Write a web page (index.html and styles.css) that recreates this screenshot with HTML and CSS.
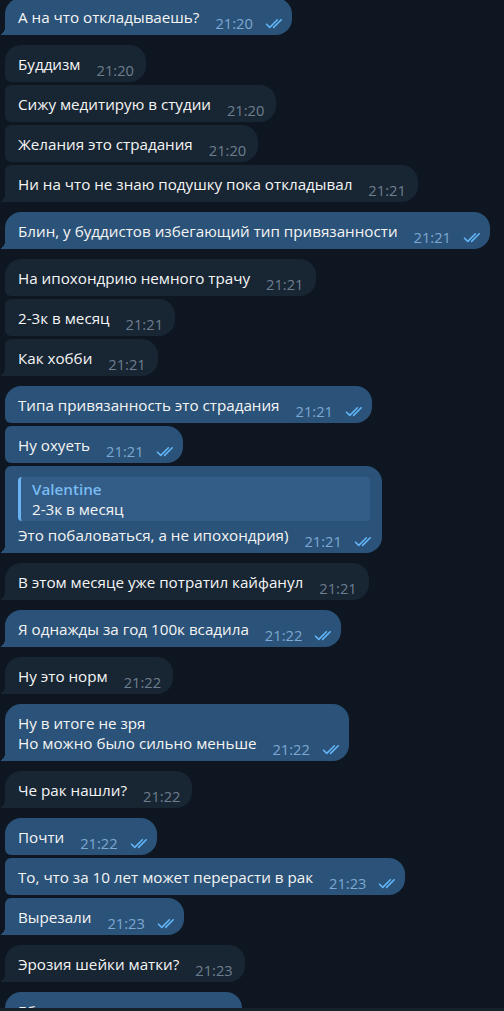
FILE: index.html
```html
<!DOCTYPE html>
<html lang="ru">
<head>
<meta charset="utf-8">
<title>Chat</title>
<link rel="stylesheet" href="styles.css">
</head>
<body>
<svg width="0" height="0" class="defs">
  <symbol id="dchk" viewBox="0 0 20 11">
    <path d="M1.5 6.2 L4.8 9.4 L12.4 1.8" fill="none" stroke="currentColor" stroke-width="1.6" stroke-linecap="round" stroke-linejoin="round"/>
    <path d="M8.6 9.4 L16.2 1.8" fill="none" stroke="currentColor" stroke-width="1.6" stroke-linecap="round"/>
  </symbol>
</svg>
<div class="screen">
  <div class="chat">
    <div class="group out first-group">
      <div class="msg tail"><span class="text">А на что откладываешь?</span><span class="meta"><span class="time">21:20</span><svg class="check"><use href="#dchk"/></svg></span></div>
    </div>
    <div class="group in">
      <div class="msg"><span class="text">Буддизм</span><span class="meta"><span class="time">21:20</span></span></div>
      <div class="msg"><span class="text">Сижу медитирую в студии</span><span class="meta"><span class="time">21:20</span></span></div>
      <div class="msg"><span class="text">Желания это страдания</span><span class="meta"><span class="time">21:20</span></span></div>
      <div class="msg tail"><span class="text">Ни на что не знаю подушку пока откладывал</span><span class="meta"><span class="time">21:21</span></span></div>
    </div>
    <div class="group out">
      <div class="msg tail"><span class="text">Блин, у буддистов избегающий тип привязанности</span><span class="meta"><span class="time">21:21</span><svg class="check"><use href="#dchk"/></svg></span></div>
    </div>
    <div class="group in">
      <div class="msg"><span class="text">На ипохондрию немного трачу</span><span class="meta"><span class="time">21:21</span></span></div>
      <div class="msg"><span class="text">2-3к в месяц</span><span class="meta"><span class="time">21:21</span></span></div>
      <div class="msg tail"><span class="text">Как хобби</span><span class="meta"><span class="time">21:21</span></span></div>
    </div>
    <div class="group out">
      <div class="msg"><span class="text">Типа привязанность это страдания</span><span class="meta"><span class="time">21:21</span><svg class="check"><use href="#dchk"/></svg></span></div>
      <div class="msg"><span class="text">Ну охуеть</span><span class="meta"><span class="time">21:21</span><svg class="check"><use href="#dchk"/></svg></span></div>
      <div class="msg tail reply">
        <div class="quote"><div class="quote-name">Valentine</div><div class="quote-text">2-3к в месяц</div></div>
        <div class="line"><span class="text">Это побаловаться, а не ипохондрия)</span><span class="meta"><span class="time">21:21</span><svg class="check"><use href="#dchk"/></svg></span></div>
      </div>
    </div>
    <div class="group in">
      <div class="msg tail"><span class="text">В этом месяце уже потратил кайфанул</span><span class="meta"><span class="time">21:21</span></span></div>
    </div>
    <div class="group out">
      <div class="msg tail"><span class="text">Я однажды за год 100к всадила</span><span class="meta"><span class="time">21:22</span><svg class="check"><use href="#dchk"/></svg></span></div>
    </div>
    <div class="group in">
      <div class="msg tail"><span class="text">Ну это норм</span><span class="meta"><span class="time">21:22</span></span></div>
    </div>
    <div class="group out">
      <div class="msg tail"><span class="text">Ну в итоге не зря<br>Но можно было сильно меньше</span><span class="meta"><span class="time">21:22</span><svg class="check"><use href="#dchk"/></svg></span></div>
    </div>
    <div class="group in">
      <div class="msg tail"><span class="text">Че рак нашли?</span><span class="meta"><span class="time">21:22</span></span></div>
    </div>
    <div class="group out">
      <div class="msg"><span class="text">Почти</span><span class="meta"><span class="time">21:22</span><svg class="check"><use href="#dchk"/></svg></span></div>
      <div class="msg"><span class="text">То, что за 10 лет может перерасти в рак</span><span class="meta"><span class="time">21:23</span><svg class="check"><use href="#dchk"/></svg></span></div>
      <div class="msg tail"><span class="text">Вырезали</span><span class="meta"><span class="time">21:23</span><svg class="check"><use href="#dchk"/></svg></span></div>
    </div>
    <div class="group in">
      <div class="msg tail"><span class="text">Эрозия шейки матки?</span><span class="meta"><span class="time">21:23</span></span></div>
    </div>
    <div class="group out">
      <div class="msg tail"><span class="text">Ебать, ну повезло</span><span class="meta"><span class="time">21:23</span><svg class="check"><use href="#dchk"/></svg></span></div>
    </div>
  </div>
  <div class="panel"></div>
</div>
</body>
</html>
```

FILE: styles.css
```css
* { box-sizing: border-box; }
html, body {
  margin: 0;
  padding: 0;
  background: #0e1621;
}
.defs { position: absolute; }
.screen {
  width: 504px;
  height: 1011px;
  display: flex;
  flex-direction: column;
  overflow: hidden;
  font-family: "Open Sans", "Noto Sans", sans-serif;
  color: #f5f5f5;
}
.chat {
  flex: 1;
  min-height: 0;
  overflow: hidden;
  display: flex;
  flex-direction: column;
  gap: 10px;
  padding-left: 5px;
}
.panel {
  height: 3px;
  flex: none;
  background: #17212b;
}
.first-group { margin-top: -2px; }
.group {
  display: flex;
  flex-direction: column;
  align-items: flex-start;
  gap: 3px;
}
.msg {
  display: flex;
  align-items: flex-end;
  flex: none;
  padding: 9px 12px 8px 13px;
  border-radius: 6px 16px 16px 6px;
  position: relative;
}
.group .msg:first-child { border-top-left-radius: 16px; }
.in .msg { background: #182533; }
.out .msg { background: #2b5278; padding-right: 7px; }
.msg.tail { border-bottom-left-radius: 0; }
.msg.tail::before {
  content: "";
  position: absolute;
  left: -6px;
  bottom: 0;
  width: 6px;
  height: 9px;
  background: radial-gradient(6px 9px at 0 0, transparent 100%, #182533 100%);
}
.out .msg.tail::before {
  background: radial-gradient(6px 9px at 0 0, transparent 100%, #2b5278 100%);
}
.text {
  font-size: 15.2px;
  line-height: 20px;
  white-space: nowrap;
}
.meta {
  display: flex;
  align-items: center;
  margin-left: 16px;
  margin-bottom: -4px;
  flex: none;
}
.time {
  font-size: 14.7px;
  line-height: 16px;
  white-space: nowrap;
}
.in .time { color: #6d7f8f; }
.out .time { color: #7da8d3; }
.check {
  width: 20px;
  height: 11px;
  margin-left: 12px;
  color: #62b6f7;
}
.msg.reply {
  flex-direction: column;
  align-items: stretch;
  padding: 11px 8px 8px 13px;
}
.quote {
  margin-right: 4px;
  background: #335d87;
  border-left: 3px solid #6ab2f2;
  border-radius: 4px;
  padding: 2px 10px 2px 11px;
  font-size: 15.2px;
  line-height: 20px;
}
.quote-name {
  color: #79bbf2;
  font-weight: 600;
}
.line {
  display: flex;
  align-items: flex-end;
  margin-top: 4px;
}
```
